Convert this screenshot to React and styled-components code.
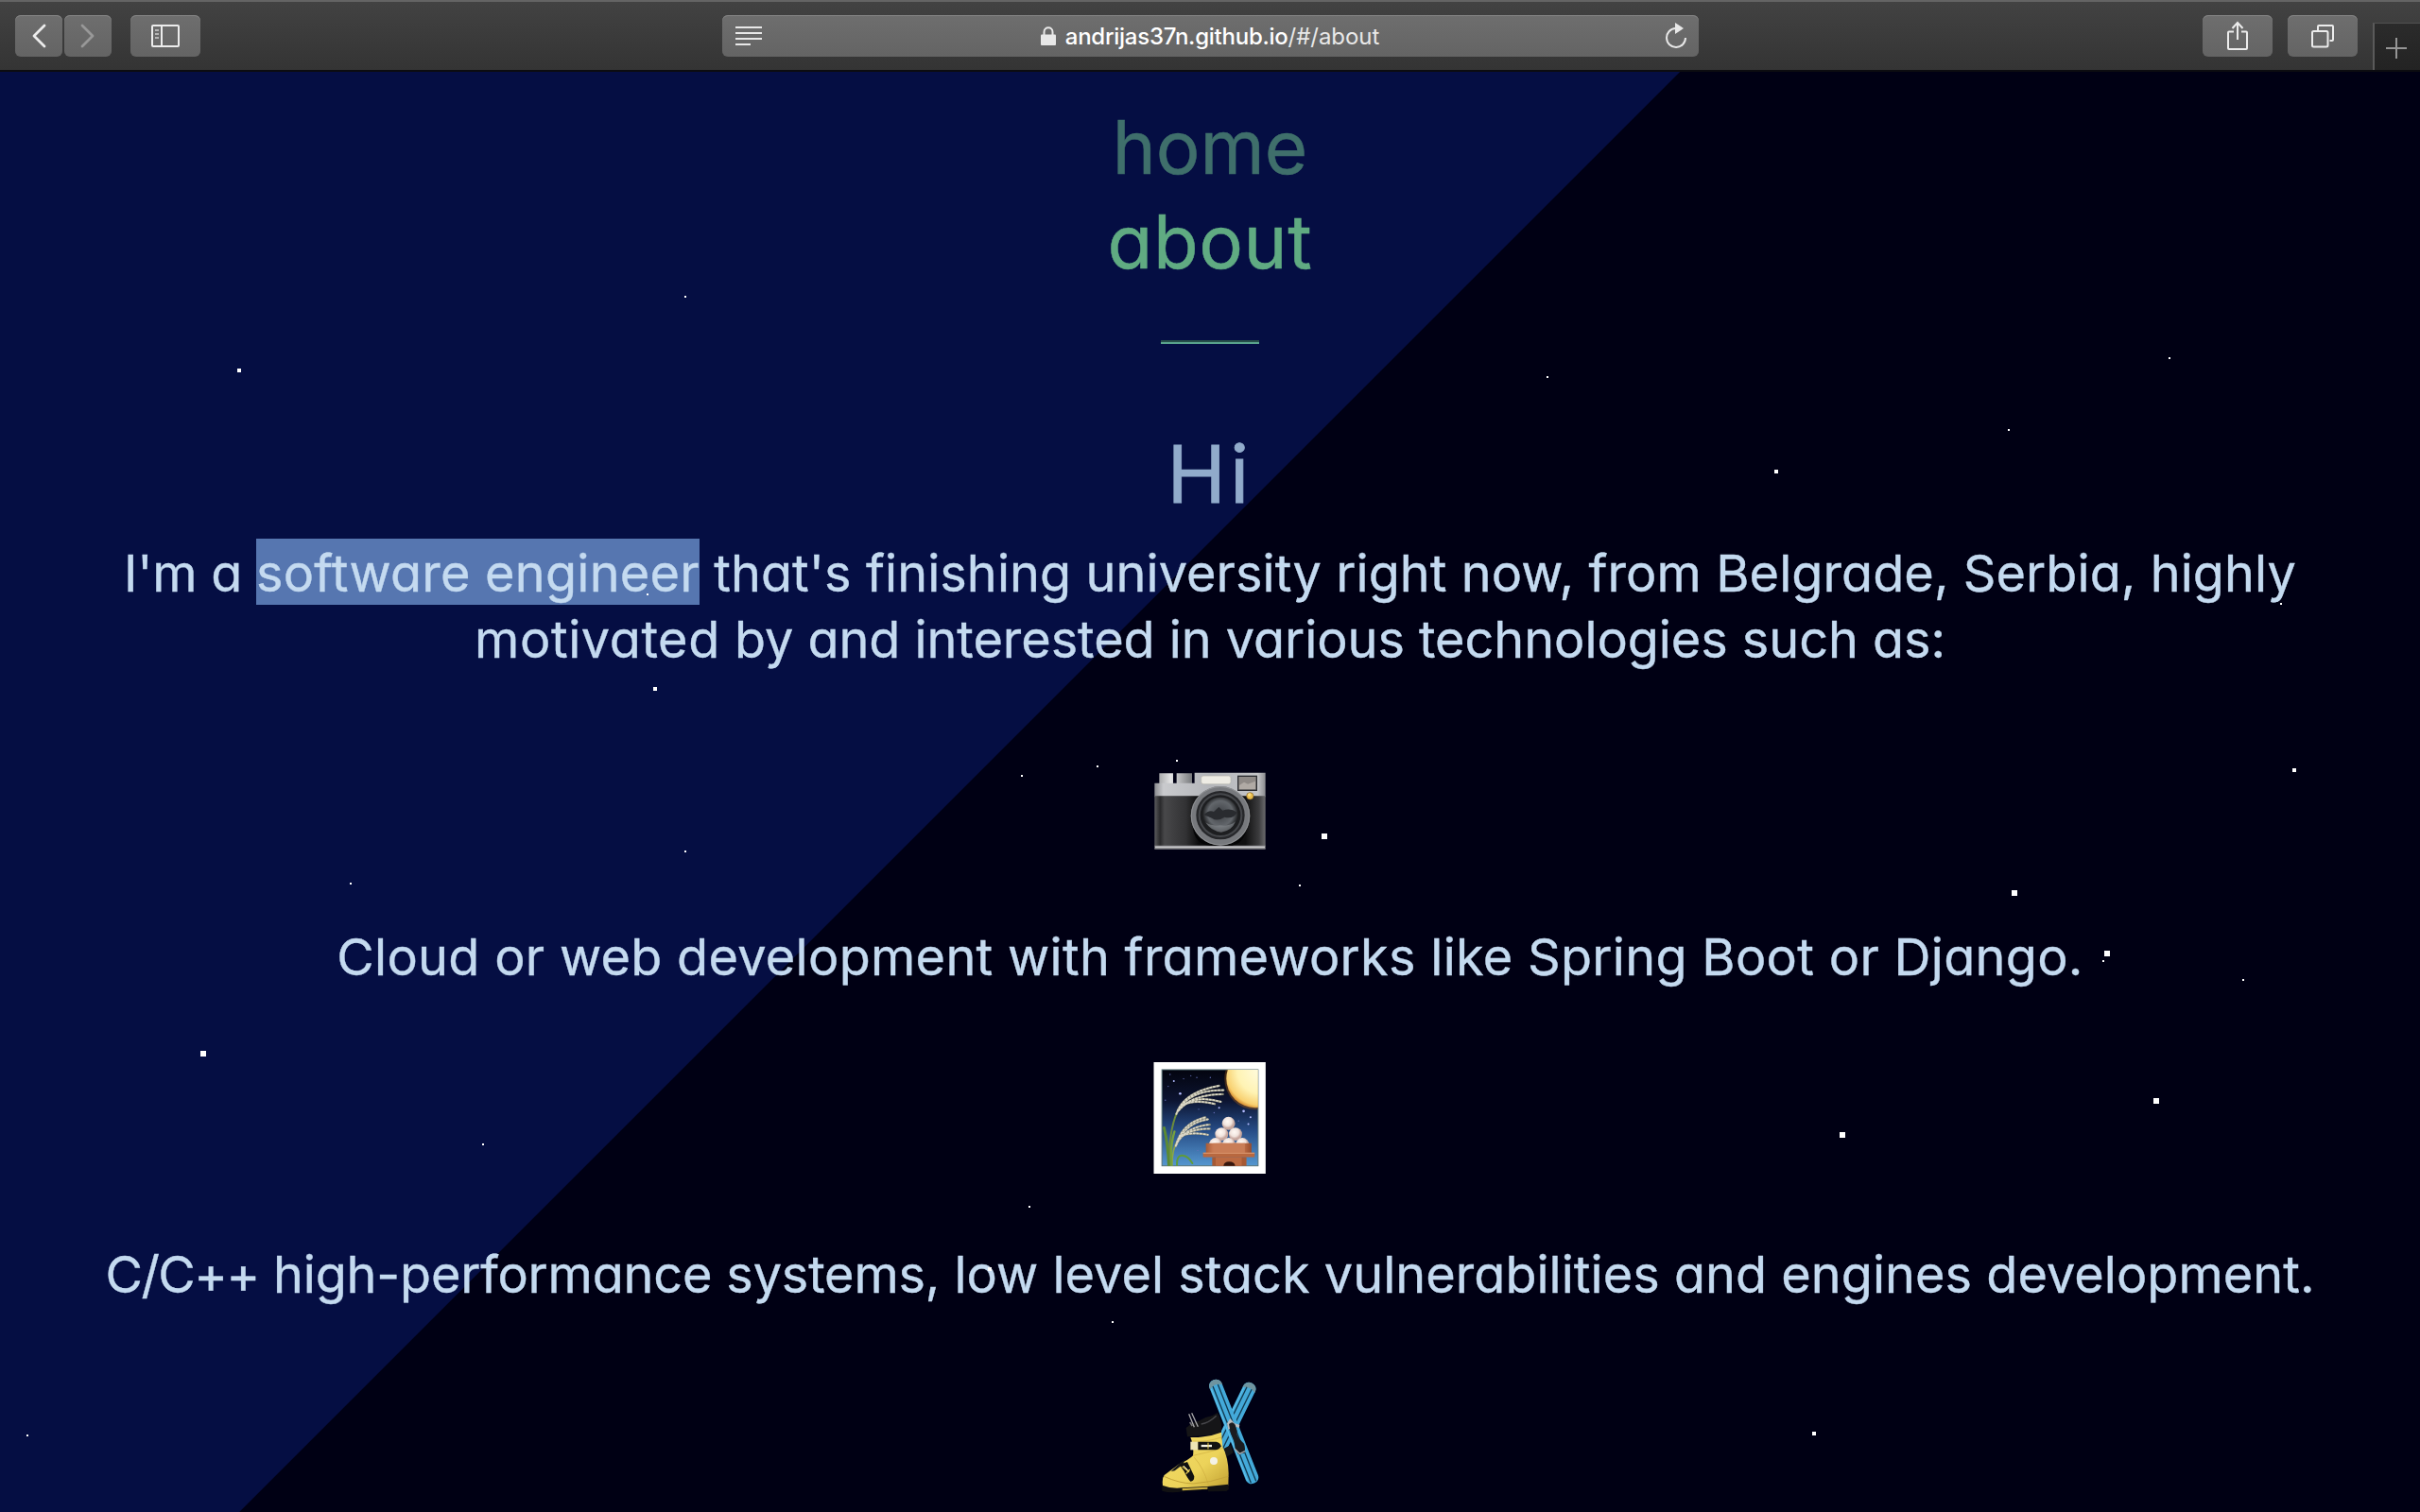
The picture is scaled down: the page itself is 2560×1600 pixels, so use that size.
import React from "react";
import styled, { createGlobalStyle, css } from "styled-components";

const GlobalStyle = createGlobalStyle`
  * { box-sizing: border-box; }
  html, body { margin: 0; padding: 0; height: 100%; overflow: hidden; }
  body { background: #000014; font-family: Inter, "Open Sans", sans-serif; }
`;

const Window = styled.div`
  display: flex;
  flex-direction: column;
  width: 2560px;
  height: 1600px;
  overflow: hidden;
`;

/* ---------- browser toolbar ---------- */

const Toolbar = styled.header`
  display: grid;
  grid-template-columns: 1fr 1033px 1fr;
  flex: 0 0 76px;
  padding-top: 14px;
  border-top: 2px solid #646464;
  border-bottom: 2px solid #0c0c10;
  background: linear-gradient(#424242, #343434);
`;

const ToolGroup = styled.div`
  display: flex;
  gap: ${(p) => p.$gap}px;
`;

const LeftTools = styled(ToolGroup)`
  padding-left: 16px;
`;

const RightTools = styled(ToolGroup)`
  justify-content: flex-end;
`;

const raised = css`
  height: 44px;
  border-radius: 6px;
  background: linear-gradient(#6e6e6e, #646464);
  box-shadow: inset 0 1px 0 #858585;
`;

const ToolButton = styled.button`
  ${raised}
  display: flex;
  align-items: center;
  justify-content: center;
  width: ${(p) => p.$width}px;
  padding: 0;
  border: 0;
  color: ${(p) => (p.$dim ? "#989898" : "#ececec")};
`;

const AddressBar = styled.div`
  ${raised}
  display: grid;
  grid-template-columns: 80px 1fr 80px;
  align-items: center;
  color: #e8e8e8;
`;

const ReaderSlot = styled.span`
  display: flex;
  padding-left: 14px;
`;

const ReloadSlot = styled.span`
  display: flex;
  justify-content: flex-end;
  padding-right: 11px;
`;

const Url = styled.span`
  display: flex;
  align-items: center;
  justify-content: center;
  gap: 10px;
  font-size: 24px;
  line-height: 44px;
  letter-spacing: -0.05px;
  white-space: nowrap;
`;

const UrlText = styled.span`
  padding-top: 2px;
  line-height: 42px;
`;

const Host = styled.span`
  color: #ffffff;
  font-weight: 500;
  letter-spacing: -0.25px;
`;

const NewTab = styled.button`
  display: flex;
  align-items: center;
  justify-content: center;
  width: 50px;
  height: 50px;
  margin-top: 8px;
  padding: 2px 2px 0 0;
  border: 0;
  border-top: 1px solid #505050;
  border-left: 2px solid #5a5a5a;
  background: linear-gradient(#2b2b2b, #232323);
  color: #959595;
`;

const Glyph = ({ w, h, stroke = 2, children }) => (
  <svg width={w} height={h} viewBox={`0 0 ${w} ${h}`} fill="none" stroke="currentColor" strokeWidth={stroke}>
    {children}
  </svg>
);

const Chevron = ({ forward }) => (
  <Glyph w={16} h={26} stroke={2.8}>
    <path
      d={forward ? "M2 2 L13 13 L2 24" : "M14 2 L3 13 L14 24"}
      strokeLinecap="round"
      strokeLinejoin="round"
    />
  </Glyph>
);

const SidebarIcon = () => (
  <Glyph w={30} h={24}>
    <rect x="1" y="1" width="28" height="22" rx="1" />
    <path d="M11 1V23" />
    <path d="M4 6H8M4 10H8M4 14H8" stroke="#b4b4b4" />
  </Glyph>
);

const ReaderIcon = () => (
  <Glyph w={28} h={20}>
    <path d="M0 1H28M0 7H28M0 13H28M0 19H16" />
  </Glyph>
);

const LockIcon = () => (
  <Glyph w={16} h={20}>
    <path d="M3.5 10V6C3.5 -0.3 12.5 -0.3 12.5 6V10" />
    <rect x="0" y="8.5" width="16" height="11.5" rx="1" fill="currentColor" stroke="none" />
  </Glyph>
);

const ReloadIcon = () => (
  <Glyph w={26} h={28}>
    <path d="M14 6H12.5A10 10 0 1 0 23 16" />
    <path d="M12 0L21 6L12 12Z" fill="currentColor" stroke="none" />
  </Glyph>
);

const ShareIcon = () => (
  <Glyph w={24} h={32}>
    <path d="M8 11.5H3Q2 11.5 2 12.5V29Q2 30 3 30H21Q22 30 22 29V12.5Q22 11.5 21 11.5H16" />
    <path d="M12 20V2M6.5 8L12 2L17.500 8" />
  </Glyph>
);

const TabsIcon = () => (
  <Glyph w={24} h={26}>
    <rect x="1" y="8" width="16.500" height="16.500" rx="1.500" />
    <path d="M7 7V3Q7 2 8 2H22Q23 2 23 3V17Q23 18 22 18H19.500" />
  </Glyph>
);

const PlusIcon = () => (
  <Glyph w={22} h={22}>
    <path d="M0 11H22M11 0V22" />
  </Glyph>
);

/* ---------- starry background ---------- */

const Sky = styled.main`
  position: relative;
  flex: 1;
  min-height: 0;
  display: flex;
  flex-direction: column;
  align-items: center;
  background: linear-gradient(135deg, #050e43 1256.2px, #000014 1257.2px);
`;

const StarLayer = styled.i`
  position: absolute;
  top: -76px;
  left: 0;
  width: ${(p) => p.$size}px;
  height: ${(p) => p.$size}px;
  box-shadow: ${(p) => p.$stars.map(([x, y]) => `${x}px ${y}px #fff`).join(", ")};
`;

const STARS = [
  {
    size: 2,
    at: [
      [724, 313], [1636, 398], [2124, 454], [2294, 378], [2412, 638], [684, 628],
      [1080, 820], [1160, 810], [1244, 804], [724, 900], [370, 934], [1374, 936],
      [2224, 1016], [2372, 1036], [510, 1210], [1088, 1276], [1176, 1398], [28, 1518],
    ],
  },
  {
    size: 4,
    at: [[251, 390], [1877, 497], [691, 727], [2425, 813], [1045, 1341], [1917, 1515]],
  },
  {
    size: 6,
    at: [
      [1398, 882], [2128, 942], [2226, 1006], [212, 1112], [1946, 1198], [2278, 1162],
    ],
  },
];

/* ---------- page content ---------- */

const Nav = styled.nav`
  display: flex;
  flex: none;
  flex-direction: column;
  align-items: center;
  padding-top: 29.6px;
  font-size: 78px;
  line-height: 100px;
  font-feature-settings: "cv11" 1;
`;

const NavLink = styled.a`
  color: ${(p) => (p.$active ? "#60ab82" : "#3f6f6b")};
  letter-spacing: ${(p) => (p.$active ? 0.6 : 0)}px;
  -webkit-text-stroke: 0.5px currentColor;
`;

const Divider = styled.hr`
  flex: none;
  width: 104px;
  height: 4px;
  margin: 54px 0 0;
  border: 0;
  border-top: 2px solid #27504a;
  background: #59a28c;
`;

const Title = styled.h1`
  flex: none;
  margin: 88px 0 20px;
  color: #91abcb;
  font-size: 84px;
  font-weight: 400;
  line-height: 100px;
  letter-spacing: 4px;
  -webkit-text-stroke: 0.8px currentColor;
`;

const Line = styled.p`
  flex: none;
  margin: 0;
  color: #c4daf0;
  font-size: 54px;
  line-height: 70px;
  letter-spacing: ${(p) => p.$track || 0}px;
  white-space: nowrap;
  font-feature-settings: "cv11" 1;
  -webkit-text-stroke: 0.4px currentColor;
`;

const Run = styled.span`
  letter-spacing: ${(p) => p.$track}px;
`;

const Selected = styled.mark`
  padding: 4px 0 1px;
  color: inherit;
  background: #5676b0;
  letter-spacing: 0.25px;
`;

const Picture = styled.svg`
  display: block;
  flex: none;
  width: 118px;
  height: 118px;
  margin: 76px 0 72px;
  overflow: visible;
`;

const Camera = () => (
  <Picture viewBox="63 -8 354 354">
    <defs>
      <linearGradient id="silver" x1="0" x2="1">
        <stop offset="0" stopColor="#8c8d91" />
        <stop offset=".08" stopColor="#c9cacd" />
        <stop offset=".5" stopColor="#b4b6ba" />
        <stop offset=".93" stopColor="#c4c5c8" />
        <stop offset="1" stopColor="#8b8c90" />
      </linearGradient>
      <linearGradient id="knob" x1="0" x2="1">
        <stop offset="0" stopColor="#a9aaac" />
        <stop offset=".35" stopColor="#e4e4e5" />
        <stop offset="1" stopColor="#77797c" />
      </linearGradient>
      <linearGradient id="leather" x1="0" x2="1">
        <stop offset="0" stopColor="#5b5b5d" />
        <stop offset=".05" stopColor="#29292b" />
        <stop offset=".09" stopColor="#48484a" />
        <stop offset=".28" stopColor="#323234" />
        <stop offset=".4" stopColor="#0b0b0c" />
        <stop offset=".82" stopColor="#101011" />
        <stop offset=".94" stopColor="#3c3c3e" />
        <stop offset="1" stopColor="#6b6b6e" />
      </linearGradient>
      <radialGradient id="lens" cx=".5" cy=".45">
        <stop offset="0" stopColor="#3d4044" />
        <stop offset=".7" stopColor="#62666b" />
        <stop offset="1" stopColor="#1d1e20" />
      </radialGradient>
    </defs>
    <path d="M79 83H123V116H79ZM134 83H183V116H134Z" fill="url(#knob)" />
    <path d="M64 114H191V81H416V158H64Z" fill="url(#silver)" />
    <path d="M64 155H416V314H64Z" fill="url(#leather)" />
    <path d="M64 312H416V324H64Z" fill="#8d8d90" />
    <path d="M66 315H414V319H66Z" fill="#cfcfd1" />
    <path d="M185 250Q190 310 240 312H310Q350 305 358 250Z" fill="#040405" />
    <rect x="212" y="91" width="94" height="26" rx="7" fill="#eeece4" stroke="#b8b6ae" strokeWidth="2" />
    <rect x="329" y="92" width="59" height="45" fill="#8f8a87" stroke="#2c2d32" strokeWidth="4" />
    <path d="M333 121L348 111L360 117L384 108V133H333Z" fill="#b0aaa5" />
    <circle cx="273" cy="218" r="94" fill="#77797d" />
    <circle cx="273" cy="218" r="92" fill="none" stroke="#8f9194" strokeWidth="3" />
    <circle cx="273" cy="216" r="77" fill="#26272a" />
    <circle cx="273" cy="216" r="70" fill="#45474b" />
    <circle cx="273" cy="216" r="64" fill="#1d1e20" />
    <circle cx="273" cy="216" r="57" fill="url(#lens)" />
    <path d="M221 215Q236 198 252 205L268 190L280 201Q306 192 326 207Q314 230 286 222Q262 238 246 225Z" fill="#292b2f" />
    <path d="M226 239Q244 267 276 270Q309 266 321 236Q300 253 273 248Q247 252 226 239Z" fill="#84888d" opacity=".65" />
    <circle cx="367" cy="155" r="11" fill="#e9bd4c" stroke="#81622c" strokeWidth="2" />
    <circle cx="365" cy="151" r="5" fill="#f8dc84" />
  </Picture>
);

const GRASS = [
  "M132 220Q155 150 268 130",
  "M136 212Q172 143 282 144",
  "M140 208Q180 158 280 157",
  "M146 200Q190 158 273 181",
  "M150 192Q190 172 254 188",
  "M130 322Q150 248 224 231",
  "M132 318Q160 248 232 237",
  "M136 308Q172 258 238 254",
  "M140 298Q176 266 238 267",
  "M144 290Q180 276 232 286",
];

const SKY_DOTS = [
  [124, 115, 3], [144, 155, 4], [106, 132, 2], [346, 211, 4], [368, 230, 3], [361, 252, 3], [252, 216, 2],
  [97, 176, 2], [268, 200, 3], [203, 205, 2], [178, 98, 2], [197, 104, 2], [240, 104, 2], [330, 242, 2],
  [200, 336, 2], [229, 362, 2], [260, 292, 2], [112, 94, 2], [155, 108, 2],
];

const DUMPLINGS = [
  [298, 250], [276, 284], [320, 284], [257, 317], [299, 317], [342, 317],
];

const MoonViewing = () => (
  <Picture viewBox="61.5 55 355 355">
    <defs>
      <linearGradient id="night" x2="0" y2="1">
        <stop offset="0" stopColor="#03040f" />
        <stop offset=".32" stopColor="#0c1431" />
        <stop offset=".62" stopColor="#254a83" />
        <stop offset="1" stopColor="#5597d0" />
      </linearGradient>
      <radialGradient id="moon" cx=".6" cy=".35" r=".68">
        <stop offset="0" stopColor="#fffce0" />
        <stop offset=".6" stopColor="#fff3b4" />
        <stop offset=".9" stopColor="#f8d070" />
        <stop offset="1" stopColor="#d58a2c" />
      </radialGradient>
      <radialGradient id="ball" cx=".42" cy=".35">
        <stop offset="0" stopColor="#fffaf5" />
        <stop offset=".65" stopColor="#f0e3dd" />
        <stop offset="1" stopColor="#c7a79e" />
      </radialGradient>
      <linearGradient id="wood" x1="0" x2="1">
        <stop offset="0" stopColor="#a55b38" />
        <stop offset=".15" stopColor="#c97a52" />
        <stop offset=".8" stopColor="#c6754c" />
        <stop offset="1" stopColor="#954b2c" />
      </linearGradient>
      <clipPath id="frame"><rect x="86" y="79" width="306" height="306" /></clipPath>
    </defs>
    <rect x="60" y="55" width="356" height="355" fill="#fff" />
    <rect x="86" y="79" width="306" height="306" fill="url(#night)" stroke="#547177" strokeWidth="3" />
    <g clipPath="url(#frame)">
      {SKY_DOTS.map(([x, y, r]) => (
        <circle key={`${x}-${y}`} cx={x} cy={y} r={r} fill={r > 2 ? "#b3bcff" : "#6672bb"} />
      ))}
      <circle cx="383" cy="108" r="98" fill="#b86a18" opacity=".35" />
      <circle cx="383" cy="108" r="92" fill="url(#moon)" />
      <g fill="none" strokeLinecap="round">
        <path d="M108 385Q108 275 134 215" stroke="#6c8b3c" strokeWidth="6" />
        <path d="M118 385Q118 330 138 300" stroke="#8aa64c" strokeWidth="5" />
        <path d="M108 385Q106 320 93 264" stroke="#5b8a33" strokeWidth="9" />
        <path d="M116 385Q112 320 126 276" stroke="#76a03e" strokeWidth="7" />
        <path d="M134 385Q132 350 152 352Q170 354 183 377" stroke="#5f9b3c" strokeWidth="6" />
        {GRASS.map((d) => (
          <path key={d} d={d} stroke="#92927e" strokeWidth="7" />
        ))}
        {GRASS.map((d) => (
          <path key={d} d={d} stroke="#dcd8c8" strokeWidth="5" strokeDasharray="4 7" />
        ))}
      </g>
      {DUMPLINGS.map(([x, y]) => (
        <circle key={`${x}-${y}`} cx={x} cy={y} r="21" fill="url(#ball)" />
      ))}
      <path d="M226 313H371V345H226Z" fill="url(#wood)" />
      <path d="M249 313H350V345H249Z" fill="#c97d56" />
      <path d="M217 343H381V357H217Z" fill="#b8683f" />
      <path d="M217 343H381V346H217Z" fill="#de9b74" />
      <path d="M246 357H355V386H246Z" fill="#a65934" />
      <path d="M257 357H340V386H257Z" fill="#bb6a42" />
      <path d="M282 386Q283 372 300 372Q318 372 319 386Z" fill="#35160e" />
    </g>
  </Picture>
);

const Ski = ({ transform, length }) => (
  <g transform={transform}>
    <rect x="-21" y="0" width="42" height={length} rx="19" fill="#43a9d9" />
    <path d="M-21 24V19A21 19 0 0 1 21 19V24Q0 10 -21 24Z" fill="#6f949f" />
    <path d={`M-9 18V${length - 4}M8 18V${length - 4}`} stroke="#12394f" strokeWidth="4" />
    <path d={`M-17 24V${length - 16}`} stroke="#62c4ee" strokeWidth="3" />
  </g>
);

const SkiBoot = () => (
  <Picture viewBox="33 43 354 354">
    <defs>
      <linearGradient id="shell" x1="0" y1="0" x2="1" y2="1">
        <stop offset="0" stopColor="#f3dc68" />
        <stop offset=".6" stopColor="#ecd35a" />
        <stop offset="1" stopColor="#c09f30" />
      </linearGradient>
    </defs>
    <Ski transform="translate(343 54) rotate(26)" length={310} />
    <path d="M253 262L276 250L284 275L262 288Z" fill="#17181b" />
    <Ski transform="translate(221 44) rotate(-21.500)" length={352} />
    <path d="M264 182L274 166L288 182L304 186L302 196L286 190L268 202Z" fill="#b9bec3" />
    <path d="M270 184Q282 172 290 186L296 206Q292 216 302 230L318 246Q324 262 318 276L300 280L290 262L286 236L276 214Z" fill="#1b1c20" />
    <path d="M288 262L304 278L321 270" stroke="#a5abb1" strokeWidth="4" fill="none" />
    <path d="M152 182L170 176L196 163Q220 158 233 148L240 160L246 184V216L138 224L134 196Z" fill="#151517" />
    <path d="M182 184Q206 181 230 158" stroke="#48484c" strokeWidth="4" fill="none" />
    <path d="M143 152L160 194M152 149L172 192" stroke="#a8a8aa" strokeWidth="4" />
    <path d="M146 178L154 190" stroke="#737376" strokeWidth="5" />
    <path d="M148 226Q200 228 246 210L250 256Q268 290 269 340L268 380L204 388L120 391H62Q55 358 65 346L110 312Q144 297 156 284Q160 256 148 226Z" fill="url(#shell)" />
    <path d="M154 238Q200 242 246 226M156 284Q210 272 252 260M160 290Q188 320 205 376" stroke="#cfae40" strokeWidth="2" fill="none" />
    <path d="M64 350Q112 372 156 373Q210 370 268 350" stroke="#c5a53a" strokeWidth="3" fill="none" />
    <path d="M58 378Q88 390 122 386V398Q84 404 58 396ZM122 386L202 382V393L122 398ZM202 382L268 375L270 390L262 397L204 398Z" fill="#111113" />
    <path d="M122 388L202 384V390L122 395Z" fill="#cfb140" />
    <rect x="148" y="240" width="25" height="26" fill="#ede4b4" />
    <path d="M172 240H230Q244 244 245 254Q240 266 226 266H172Z" fill="#111" />
    <path d="M182 253H216" stroke="#f4f1e3" strokeWidth="7" />
    <path d="M204 243V263" stroke="#ead057" strokeWidth="3" />
    <circle cx="222" cy="301" r="12" fill="#f4f2e6" />
    <path d="M86 334L116 306L132 296L124 312L98 332Z" fill="#18181a" />
    <path d="M113 312L138 304L148 324L160 350Q160 366 148 366Q138 356 128 334Z" fill="#111" />
    <path d="M122 318L144 336M134 342L146 328" stroke="#ead057" strokeWidth="4" />
    <path d="M126 316L140 330" stroke="#f5efcf" strokeWidth="3" />
  </Picture>
);

export default function App() {
  return (
    <Window>
      <GlobalStyle />
      <Toolbar>
        <LeftTools $gap={20}>
          <ToolGroup $gap={2}>
            <ToolButton $width={50}><Chevron /></ToolButton>
            <ToolButton $width={50} $dim><Chevron forward /></ToolButton>
          </ToolGroup>
          <ToolButton $width={74}><SidebarIcon /></ToolButton>
        </LeftTools>
        <AddressBar>
          <ReaderSlot><ReaderIcon /></ReaderSlot>
          <Url>
            <LockIcon />
            <UrlText><Host>andrijas37n.github.io</Host>/#/about</UrlText>
          </Url>
          <ReloadSlot><ReloadIcon /></ReloadSlot>
        </AddressBar>
        <RightTools $gap={16}>
          <ToolButton $width={74}><ShareIcon /></ToolButton>
          <ToolButton $width={74}><TabsIcon /></ToolButton>
          <NewTab><PlusIcon /></NewTab>
        </RightTools>
      </Toolbar>

      <Sky>
        <Nav>
          <NavLink>home</NavLink>
          <NavLink $active>about</NavLink>
        </Nav>
        <Divider />
        <Title>Hi</Title>
        <Line $track={0.08}>
          <Run $track={-0.25}>I'm a </Run>
          <Selected>software engineer</Selected> that's finishing university right now, from Belgrade, Serbia, highly
        </Line>
        <Line $track={-0.05}>
          <Run $track={0.6}>motivated</Run> by and interested in various technologies such as:
        </Line>
        <Camera />
        <Line $track={0.3}>Cloud or web development with frameworks like Spring Boot or Django.</Line>
        <MoonViewing />
        <Line $track={0.04}>
          <Run $track={-1.5}>C/C++</Run> <Run $track={-0.18}>high-performance systems,</Run> low level stack
          vulnerabilities and engines development.
        </Line>
        <SkiBoot />
        {STARS.map((layer) => (
          <StarLayer key={layer.size} $size={layer.size} $stars={layer.at} />
        ))}
      </Sky>
    </Window>
  );
}
